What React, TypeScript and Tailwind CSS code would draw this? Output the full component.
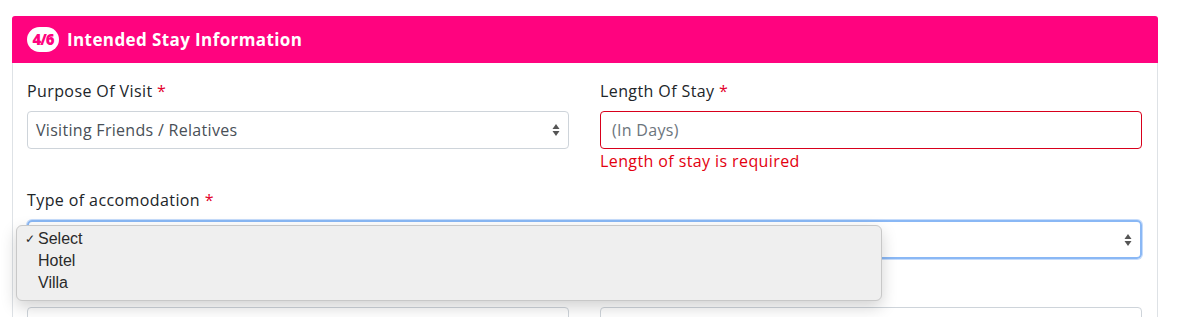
/**
 * Intended stay step (4/6) of the visa application form, with the native
 * accommodation dropdown shown open.
 */
const font = { fontFamily: "'Open Sans', 'Liberation Sans', sans-serif" };

function Label({ text }: { text: string }) {
  return (
    <label className="block text-[16px] tracking-[0.4px] text-[#212529] mb-[9px] leading-[22px]">
      {text} <span className="text-[#e3002b]">*</span>
    </label>
  );
}

function Arrows() {
  return (
    <svg width="8" height="14" viewBox="0 0 8 14" className="absolute right-[8px] top-1/2 -translate-y-1/2">
      <path d="M4 1 L7.5 6 H0.5 Z" fill="#555" />
      <path d="M4 13 L7.5 8 H0.5 Z" fill="#555" />
    </svg>
  );
}

export default function App() {
  return (
    <div className="w-[1185px] h-[317px] overflow-hidden bg-white pt-4 pl-3" style={font}>
      <div className="w-[1146px] border border-[#dee2e6] rounded-t-[4px]">
        <div className="h-[47px] bg-[#ff037f] rounded-t-[3px] flex items-center pl-[15px] gap-[8px] -mx-px -mt-px">
          <span className="w-[32px] h-[25px] rounded-full bg-white text-[#ff037f] font-extrabold text-[15px] tracking-[-1px] flex items-center justify-center">
            4/6
          </span>
          <span className="text-white font-bold text-[17px] tracking-[0.4px]">Intended Stay Information</span>
        </div>
        <div className="pl-[14px] pr-[15px] pt-[17px]">
          <div className="grid grid-cols-2 gap-x-[31px]">
            <div>
              <Label text="Purpose Of Visit" />
              <div className="relative h-[38px] border border-[#ced4da] rounded-[4px] flex items-center px-[8px] text-[16px] tracking-[0.3px] text-[#495057]">
                Visiting Friends / Relatives
                <Arrows />
              </div>
            </div>
            <div>
              <Label text="Length Of Stay" />
              <div className="h-[38px] border border-[#d8001b] rounded-[4px] flex items-center px-[11px] text-[16px] tracking-[0.3px] text-[#6c757d]">
                (In Days)
              </div>
              <div className="text-[16px] tracking-[0.4px] text-[#e3000f] mt-[1px] leading-[22px]">
                Length of stay is required
              </div>
            </div>
          </div>
          <div className="mt-[17px]">
            <Label text="Type of accomodation" />
            <div className="relative h-[39px] border-2 border-[#8ab8f5] rounded-[5px] shadow-[0_0_0_1px_#c6dcfb]">
              <Arrows />
              <div
                className="absolute left-[-13px] top-[3px] w-[866px] h-[76px] bg-[#efefef] border border-[#c8c8c8] rounded-[6px] shadow-[0_6px_16px_rgba(0,0,0,0.18)] pt-[2px] text-[16px] text-[#2a2a2a] leading-[22px] z-10"
                style={{ fontFamily: "'Liberation Sans', Arial, sans-serif" }}
              >
                <div className="flex items-center">
                  <span className="w-[21px] text-[12px] text-center pl-[4px]">✓</span>Select
                </div>
                <div className="pl-[21px]">Hotel</div>
                <div className="pl-[21px]">Villa</div>
              </div>
            </div>
          </div>
          <div className="grid grid-cols-2 gap-x-[31px] mt-[48px]">
            <div className="h-[38px] border border-[#ced4da] rounded-[4px]" />
            <div className="h-[38px] border border-[#ced4da] rounded-[4px]" />
          </div>
        </div>
      </div>
    </div>
  );
}
